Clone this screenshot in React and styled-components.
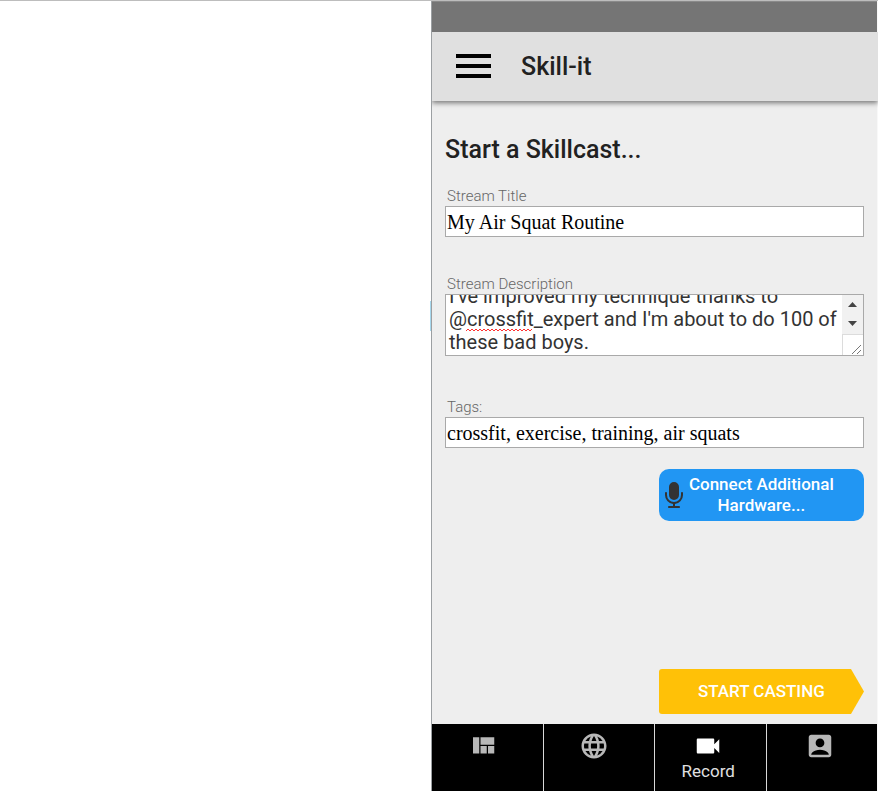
import React, { useLayoutEffect, useRef, useState } from "react";
import styled, { createGlobalStyle } from "styled-components";
import { MdLanguage, MdAccountBox, MdVideocam } from "react-icons/md";

const GlobalStyle = createGlobalStyle`
  *, *::before, *::after { box-sizing: border-box; }
  body {
    margin: 0;
    background: #fff;
    font-family: Roboto, "Liberation Sans", sans-serif;
    color: #212121;
  }
`;

const Page = styled.div`
  display: grid;
  grid-template-columns: 27fr 28fr;
  min-height: 100vh;
  border-top: 1px solid #bdbdbd;
`;

const Backdrop = styled.div`
  display: flex;
  align-items: flex-start;
  justify-content: flex-end;
  padding-top: 300px;
`;

const Handle = styled.span`
  width: 1px;
  height: 30px;
  background: #a6d8ee;
`;

const Panel = styled.div`
  display: flex;
  flex-direction: column;
  min-width: 0;
  background: #eee;
  border-left: 1px solid #9b9fa2;
  border-right: 1px solid #f8f8f8;
`;

const StatusBar = styled.div`
  height: 31px;
  background: #757575;
  border-top: 1px solid #8a8a8a;
`;

const AppBar = styled.header`
  display: flex;
  align-items: center;
  gap: 30px;
  height: 69px;
  margin-right: -1px;
  padding: 0 24px;
  background: #e0e0e0;
  box-shadow: 0 2px 5px rgba(0, 0, 0, 0.5);
  clip-path: inset(0 0 -10px 0);
`;

const MenuButton = styled.button`
  display: flex;
  padding: 0;
  border: 0;
  background: none;
  color: #000;
  cursor: pointer;
`;

const AppName = styled.h1`
  margin: 0;
  font-size: 25px;
  line-height: 32px;
  font-weight: 500;
`;

const Main = styled.main`
  display: flex;
  flex: 1;
  flex-direction: column;
  padding: 32px 13px 10px;
`;

const Heading = styled.h2`
  margin: 0 0 21px;
  font-size: 25px;
  line-height: 34px;
  font-weight: 500;
`;

const Field = styled.div`
  display: flex;
  flex-direction: column;
  margin-bottom: ${(p) => p.$gap};
`;

const Label = styled.label`
  padding-left: 2px;
  font-size: 15px;
  line-height: 16px;
  font-weight: 300;
  color: #666;
`;

const TextInput = styled.input`
  width: 100%;
  height: 31px;
  margin-top: 2px;
  padding: 2px 1px 0;
  border: 1px solid #a9a9a9;
  border-radius: 0;
  background: #fff;
  color: #000;
  font-family: "Liberation Serif", serif;
  font-size: 20px;
`;

const AreaFrame = styled.div`
  position: relative;
  display: flex;
  height: 62px;
  margin-top: 2px;
  border: 1px solid #a9a9a9;
  background: #fff;
`;

const TextArea = styled.textarea`
  flex: 1;
  min-width: 0;
  padding: 2px 0 1px 3px;
  border: 0;
  outline: 0;
  resize: none;
  background: transparent;
  color: #333;
  font-family: Roboto, "Liberation Sans", sans-serif;
  font-size: 20px;
  line-height: 23px;
  overflow-y: scroll;
  scrollbar-width: none;
`;

const Squiggle = styled.svg`
  position: absolute;
  left: 20px;
  top: 33px;
  pointer-events: none;
`;

const ScrollRail = styled.div`
  display: flex;
  flex-direction: column;
  width: 21px;
  background: #f1f1f1;
`;

const ScrollButton = styled.button`
  display: flex;
  align-items: center;
  justify-content: center;
  height: 19px;
  padding: 0;
  border: 0;
  background: none;
`;

const Grip = styled.div`
  display: flex;
  flex: 1;
  align-items: flex-end;
  justify-content: flex-end;
  padding: 1px;
  margin-top: 1px;
  border: solid #dcdcdc;
  border-width: 1px 0 0 1px;
  background: #fff;
`;

const ActionButton = styled.button`
  display: flex;
  align-items: center;
  align-self: flex-end;
  width: 49%;
  border: 0;
  color: #fff;
  font-family: inherit;
  font-size: 17px;
  font-weight: 500;
  line-height: 21px;
  cursor: pointer;
`;

const HardwareButton = styled(ActionButton)`
  gap: 4px;
  padding: 5px 28px 5px 6px;
  border-radius: 10px;
  background: #2196f3;
`;

const HardwareText = styled.span`
  flex: 1;
  white-space: nowrap;
`;

const CastButton = styled(ActionButton)`
  justify-content: center;
  height: 45px;
  margin-top: auto;
  padding: 0;
  border-radius: 3px 0 0 3px;
  background: #ffc107;
  clip-path: polygon(0 0, calc(100% - 13px) 0, 100% 50%, calc(100% - 13px) 100%, 0 100%);
`;

const TabBar = styled.nav`
  display: grid;
  grid-template-columns: repeat(4, 1fr);
  gap: 1px;
  background: #d8d8d8;
`;

const Tab = styled.button`
  display: flex;
  flex-direction: column;
  align-items: center;
  height: 67px;
  padding: ${(p) => (p.$active ? "7px 4px 0 0" : "7px 9px 0 0")};
  border: 0;
  background: #000;
  color: ${(p) => (p.$active ? "#fff" : "#b8b8b8")};
  font-family: inherit;
  font-size: 17px;
  line-height: 20px;
  cursor: pointer;

  &:last-child {
    padding-right: 4px;
  }
`;

const TabLabel = styled.span`
  color: #e0e0e0;
`;

const MenuIcon = () => (
  <svg width="35" height="25" viewBox="0 0 35 25" fill="currentColor" aria-hidden="true">
    <path d="M0 0h35v4H0zM0 10h35v4H0zM0 20h35v4H0z" />
  </svg>
);

const MicIcon = () => (
  <svg width="18" height="26" viewBox="64 0 1152 1664" fill="#333" aria-hidden="true">
    <path d="M1216 704v128q0 221-147.5 384.5t-364.5 187.5v132h256q26 0 45 19t19 45-19 45-45 19h-640q-26 0-45-19t-19-45 19-45 45-19h256v-132q-217-24-364.5-187.5t-147.5-384.5v-128q0-26 19-45t45-19 45 19 19 45v128q0 185 131.5 316.5t316.5 131.5 316.5-131.5 131.5-316.5v-128q0-26 19-45t45-19 45 19 19 45zm-256-384v512q0 132-94 226t-226 94-226-94-94-226v-512q0-132 94-226t226-94 226 94 94 226z" />
  </svg>
);

const QuiltIcon = () => (
  <svg width="30" height="30" viewBox="0 0 24 24" fill="currentColor" aria-hidden="true">
    <path d="M10 18h5v-6h-5v6zm-6 0h5V5H4v13zm12 0h5v-6h-5v6zM10 5v6h11V5H10z" />
  </svg>
);

const Arrow = ({ down }) => (
  <svg width="9" height="5" viewBox="0 0 9 5" fill="#444" aria-hidden="true">
    <path d={down ? "M0 0h9L4.500 5z" : "M0 5h9L4.500 0z"} />
  </svg>
);

const zigzag = Array.from({ length: 34 }, (_, i) => `${i * 2},${i % 2 ? 1 : 3}`).join(" ");

const tabs = [
  { id: "home", name: "Dashboard", icon: <QuiltIcon /> },
  { id: "world", name: "Explore", icon: <MdLanguage size={30} /> },
  { id: "record", name: "Record", icon: <MdVideocam size={30} /> },
  { id: "account", name: "Account", icon: <MdAccountBox size={30} /> },
];

export default function App() {
  const area = useRef(null);
  const [active, setActive] = useState("record");

  useLayoutEffect(() => {
    area.current.scrollTop = area.current.scrollHeight;
  }, []);

  const scrollBy = (amount) => {
    area.current.scrollTop += amount;
  };

  return (
    <>
      <GlobalStyle />
      <Page>
        <Backdrop>
          <Handle />
        </Backdrop>
        <Panel>
          <StatusBar />
          <AppBar>
            <MenuButton type="button" aria-label="Menu">
              <MenuIcon />
            </MenuButton>
            <AppName>Skill-it</AppName>
          </AppBar>
          <Main>
            <Heading>Start a Skillcast...</Heading>
            <Field $gap="39px">
              <Label htmlFor="title">Stream Title</Label>
              <TextInput id="title" defaultValue="My Air Squat Routine" />
            </Field>
            <Field $gap="43px">
              <Label htmlFor="description">Stream Description</Label>
              <AreaFrame>
                <TextArea
                  id="description"
                  ref={area}
                  spellCheck={false}
                  defaultValue={
                    "I've improved my technique thanks to @crossfit_expert and I'm about to do 100 of these bad boys."
                  }
                />
                <Squiggle width="67" height="4" viewBox="0 0 67 4" aria-hidden="true">
                  <polyline points={zigzag} fill="none" stroke="#f33" strokeWidth="1" />
                </Squiggle>
                <ScrollRail>
                  <ScrollButton type="button" aria-label="Scroll up" onClick={() => scrollBy(-23)}>
                    <Arrow />
                  </ScrollButton>
                  <ScrollButton type="button" aria-label="Scroll down" onClick={() => scrollBy(23)}>
                    <Arrow down />
                  </ScrollButton>
                  <Grip>
                    <svg width="10" height="10" viewBox="0 0 10 10" stroke="#777" aria-hidden="true">
                      <path d="M0 10L9 1M5 10L9 6" />
                    </svg>
                  </Grip>
                </ScrollRail>
              </AreaFrame>
            </Field>
            <Field $gap="21px">
              <Label htmlFor="tags">Tags:</Label>
              <TextInput id="tags" defaultValue="crossfit, exercise, training, air squats" />
            </Field>
            <HardwareButton type="button">
              <MicIcon />
              <HardwareText>
                Connect Additional
                <br />
                Hardware...
              </HardwareText>
            </HardwareButton>
            <CastButton type="button">START CASTING</CastButton>
          </Main>
          <TabBar>
            {tabs.map((t) => (
              <Tab
                key={t.id}
                type="button"
                aria-label={t.name}
                $active={t.id === active}
                onClick={() => setActive(t.id)}
              >
                {t.icon}
                {t.id === active && <TabLabel>{t.name}</TabLabel>}
              </Tab>
            ))}
          </TabBar>
        </Panel>
      </Page>
    </>
  );
}
